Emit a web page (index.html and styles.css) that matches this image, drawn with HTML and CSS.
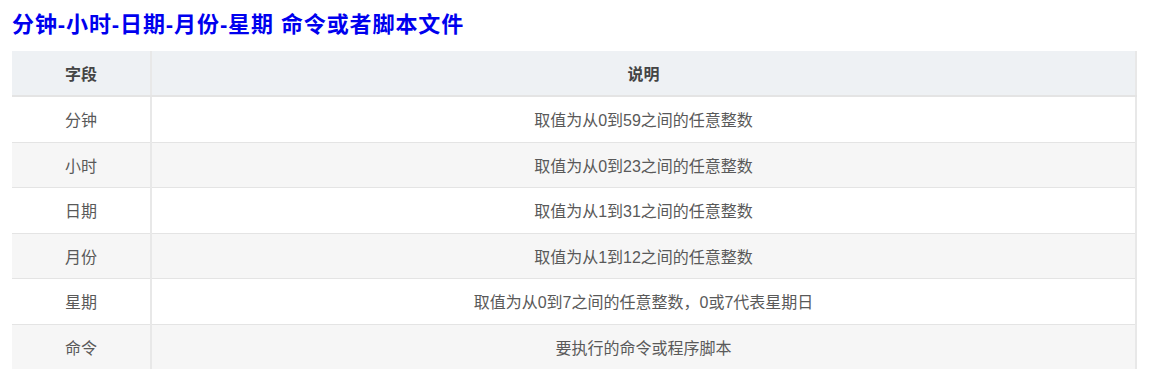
FILE: index.html
```html
<!DOCTYPE html>
<html lang="zh">
<head>
<meta charset="utf-8">
<link rel="stylesheet" href="styles.css">
</head>
<body>
<h2 class="title">分钟-小时-日期-月份-星期 命令或者脚本文件</h2>
<table class="grid">
  <thead>
    <tr><th class="c1">字段</th><th>说明</th></tr>
  </thead>
  <tbody>
    <tr><td class="c1">分钟</td><td>取值为从0到59之间的任意整数</td></tr>
    <tr><td class="c1">小时</td><td>取值为从0到23之间的任意整数</td></tr>
    <tr><td class="c1">日期</td><td>取值为从1到31之间的任意整数</td></tr>
    <tr><td class="c1">月份</td><td>取值为从1到12之间的任意整数</td></tr>
    <tr><td class="c1">星期</td><td>取值为从0到7之间的任意整数，0或7代表星期日</td></tr>
    <tr><td class="c1">命令</td><td>要执行的命令或程序脚本</td></tr>
  </tbody>
</table>
</body>
</html>
```
FILE: styles.css
```css
html, body { margin: 0; padding: 0; background: #fff; }
body {
  padding: 10px 19px 0 12px;
  font-family: "Liberation Sans", "Noto Sans CJK SC", sans-serif;
}
.title {
  margin: 0 0 11px 0;
  font-size: 22px;
  line-height: 30px;
  font-weight: bold;
  color: #0000ee;
  letter-spacing: 0.9px;
}
.grid {
  width: 100%;
  border-collapse: collapse;
  font-size: 16px;
  color: #595959;
  border-right: 2px solid #e8e8e8;
}
.grid th, .grid td {
  height: 44.5px;
  padding: 0;
  text-align: center;
  border-bottom: 1px solid #e4e4e4;
}
.grid .c1 {
  width: 138px;
  border-right: 2px solid #e8e8e8;
}
.grid thead tr { background: #eef1f4; }
.grid th { font-weight: bold; color: #444; height: 44px; border-bottom: 2px solid #e4e4e4; }
.grid tbody tr:nth-child(even) { background: #f6f6f6; }
.grid tbody tr:last-child td { border-bottom: none; }
```
